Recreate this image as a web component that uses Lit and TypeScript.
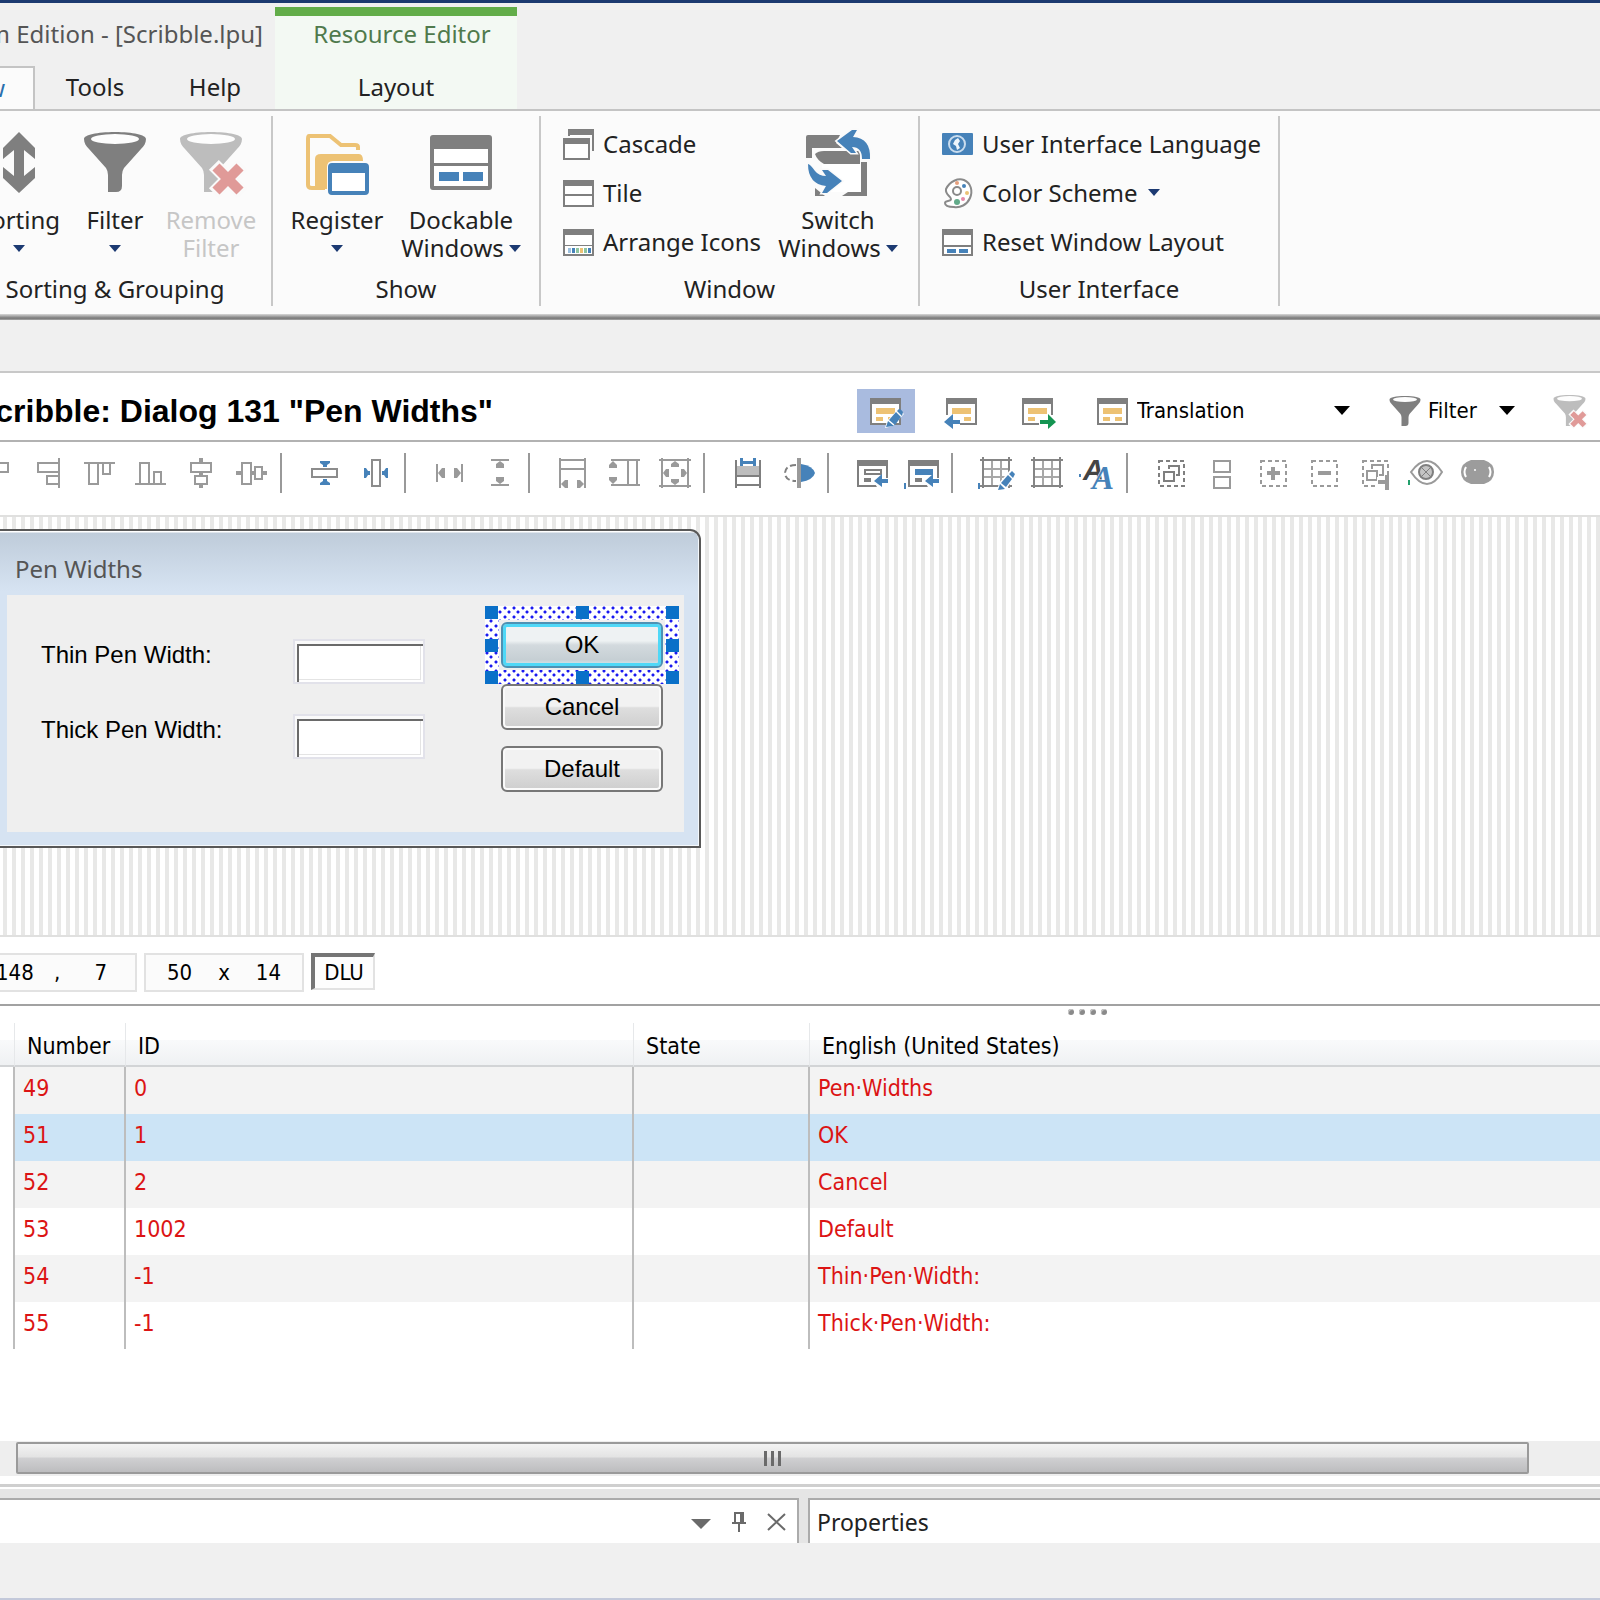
import { LitElement, html, css, svg, nothing } from "lit";
import type { SVGTemplateResult } from "lit";
import { customElement, state } from "lit/decorators.js";
import { classMap } from "lit/directives/class-map.js";

type Art = SVGTemplateResult;

const icon = (w: number, h: number, art: Art) =>
  html`<svg class="icon" width=${w} height=${h} viewBox="0 0 ${w} ${h}" aria-hidden="true">${art}</svg>`;

const caret = html`<svg class="caret" width="12" height="7" viewBox="0 0 12 7" aria-hidden="true"><path d="M0 0H12L6 7Z" fill="#1c3a72" /></svg>`;
const blackCaret = html`<svg class="icon" width="16" height="9" viewBox="0 0 16 9" aria-hidden="true"><path d="M0 0H16L8 9Z" fill="#000" /></svg>`;

const G = "#7f7f7f";
const L = "#9a9a9a";
const B = "#4682b9";
const Y = "#edc274";

/* ---- ribbon artwork ---- */
const sortArt = svg`<path d="M32 2L48 18V29L37 20V46L48 37V48L32 63L16 48V37L27 46V20L16 29V18Z" fill=${G} />`;

const funnel = (fill: string) => svg`
  <path d="M1 9C1 5 14 2 32 2S63 5 63 9C63 13 61 16 58 19L41 38Q39 41 39 45V56Q39 62 33 62H25V45Q25 41 23 38L6 19C3 16 1 13 1 9Z" fill=${fill} />
  <ellipse cx="32" cy="9" rx="24" ry="5" fill="#fdfdfd" />`;

const removeFunnel = svg`
  ${funnel("#bdbdbd")}
  <g transform="translate(49 49) rotate(45)">
    <path d="M-7 -20H7V-7H20V7H7V20H-7V7H-20V-7H-7Z" fill="#fafafa" />
    <path d="M-5 -17H5V-5H17V5H5V17H-5V5H-17V-5H-5Z" fill="#e09a98" />
  </g>`;

const registerArt = svg`
  <path d="M53 20V17Q53 15 50 15H36L25 6H4Q3 6 3 9V55Q3 58 7 58H20" fill="none" stroke=${Y} stroke-width="4" />
  <path d="M10 59V29Q10 24 16 24H54Q58 24 58 31H28Q22 31 22 37V59Z" fill=${Y} />
  <rect x="25" y="35" width="37" height="28" rx="2" fill="#fff" stroke=${B} stroke-width="4" />
  <rect x="24" y="34" width="39" height="9" fill=${B} />`;

const dockArt = svg`
  <rect x="3" y="7" width="58" height="51" rx="1" fill="#fff" stroke=${G} stroke-width="4" />
  <rect x="2" y="6" width="60" height="13" fill=${G} />
  <rect x="3" y="33" width="58" height="3" fill=${G} />
  <rect x="10" y="42" width="20" height="9" fill=${B} /><rect x="34" y="42" width="20" height="9" fill=${B} />`;

const switchArt = svg`
  <path d="M2 5H34L30 13L36 18H6V28H0V7Q0 5 2 5Z" fill=${G} />
  <path d="M9 24Q12 21 18 21H54V34H18Q11 30 9 24Z" fill=${G} />
  <path d="M16 34H55V62H16Z" fill="#fff" />
  <path d="M55 32H61V66H36L42 62H55ZM9 58L19 66H9Z" fill=${G} />
  <path d="M31 11L46 0H51L47 7Q65 8 64 29H56Q56 17 46 17L50 23H45Z" fill=${B} stroke="#fafafa" stroke-width="3" paint-order="stroke" />
  <path d="M36 51L21 63H16L20 56Q2 54 2 34Q4 34 9 41Q13 46 20 46L16 40H22Z" fill=${B} stroke="#fafafa" stroke-width="3" paint-order="stroke" />`;

const cascadeArt = svg`
  <rect x="6" y="2" width="24" height="20" fill="#fff" stroke=${G} stroke-width="2" />
  <rect x="5" y="1" width="26" height="6" fill=${G} />
  <rect x="0" y="8" width="29" height="24" fill="#fbfbfb" />
  <rect x="1" y="11" width="25" height="20" fill="#fff" stroke=${G} stroke-width="2" />
  <rect x="0" y="10" width="27" height="6" fill=${G} />`;
const pane = (inner: Art) => svg`
  <rect x="1" y="4" width="29" height="25" fill="#fff" stroke=${G} stroke-width="2" />
  <rect x="0" y="3" width="31" height="6" fill=${G} />${inner}`;
const tileArt = pane(svg`<rect x="1" y="17" width="29" height="2" fill=${G} />`);
const arrangeArt = pane(svg`
  <rect x="1" y="19" width="29" height="1" fill=${G} />
  <rect x="5" y="22" width="3" height="5" fill="#9cc0de" /><rect x="9" y="22" width="3" height="5" fill=${B} />
  <rect x="13" y="22" width="3" height="5" fill="#8ec5a0" /><rect x="17" y="22" width="3" height="5" fill=${Y} />
  <rect x="21" y="22" width="3" height="5" fill="#8ec5a0" /><rect x="25" y="22" width="3" height="5" fill=${B} />`);
const resetArt = pane(svg`
  <rect x="1" y="19" width="29" height="2" fill=${G} />
  <rect x="5" y="23" width="9" height="4" fill=${B} /><rect x="17" y="23" width="9" height="4" fill=${B} />`);
const flagArt = svg`
  <rect x="0" y="5" width="31" height="22" rx="1" fill=${B} />
  <circle cx="15" cy="16" r="8" fill="none" stroke="#c9dcee" stroke-width="2" />
  <path d="M16 10L13 12L11 16L14 18L15 22L18 20L16 16L18 13Z" fill="#eef5fb" />`;
const paletteArt = svg`
  <path d="M4 12C8 4 16 1 22 3C29 6 31 14 28 21C25 28 18 31 12 30C8 30 3 29 3 26C3 23 9 25 9 22C9 19 3 18 4 12Z" fill="#fff" stroke="#8a8a8a" stroke-width="2" />
  <circle cx="15" cy="14" r="4" fill="#fff" stroke="#8a8a8a" stroke-width="2" />
  <circle cx="15" cy="6" r="2" fill="#e8a07c" /><circle cx="22" cy="9" r="2" fill=${B} />
  <circle cx="25" cy="16" r="2" fill=${Y} /><circle cx="21" cy="22" r="2" fill="#e58aa8" /><circle cx="15" cy="25" r="3" fill="#62ab8a" />`;

/* ---- document header artwork ---- */
const form = svg`
  <rect x="1" y="4" width="29" height="25" fill="#fff" stroke=${G} stroke-width="2" />
  <rect x="0" y="3" width="31" height="6" fill=${G} />
  <rect x="6" y="13" width="19" height="6" fill=${Y} /><rect x="6" y="22" width="7" height="4" fill=${Y} /><rect x="18" y="22" width="7" height="4" fill=${Y} />`;
const pencil = svg`
  <path d="M15 33L17 26L28 14L34 19L23 31Z" fill="#fff" />
  <path d="M16 32L18 26L24 31ZM19 25L26 17L31 22L25 30ZM27 16L29 14Q31 14 33 17L32 21Z" fill=${B} />`;
const editFormArt = svg`${form}${pencil}`;
const backFormArt = svg`${form}<path d="M0 20H14V32H0Z" fill="#fff" /><path d="M-2 27L7 19V25H14V29H7V34Z" fill=${B} />`;
const nextFormArt = svg`${form}<path d="M17 20H32V32H17Z" fill="#fff" /><path d="M34 27L26 19V25H18V29H26V34Z" fill="#159552" />`;

/* ---- layout toolbar artwork, every drawing in a 32 px box ---- */
const ln = (d: string, c = L, w = 2) => svg`<path d=${d} fill="none" stroke=${c} stroke-width=${w} />`;
const box = (x: number, y: number, w: number, h: number, c = L) =>
  svg`<rect x=${x} y=${y} width=${w} height=${h} fill="#fff" stroke=${c} stroke-width="2" />`;
const fill = (d: string, c = L) => svg`<path d=${d} fill=${c} />`;

const win = (inner: Art) => svg`
  <rect x="2" y="4" width="29" height="25" fill="#fff" stroke=${G} stroke-width="2" />
  <rect x="1" y="3" width="31" height="6" fill=${G} />${inner}
  <path d="M16 21H33V32H22Z" fill="#fff" /><path d="M18 24L26 17V22H32V26H26V30Z" fill=${B} />`;
const grid = svg`${ln("M12 4V28M21 4V28M3 12H30M3 20H30", "#a8a8a8")}${ln("M3 0V31M29 0V31M0 3H32M0 29H32", "#858585")}`;
const dashes = (c: string) =>
  svg`<rect x="4" y="4" width="25" height="25" fill="none" stroke=${c} stroke-width="2" stroke-dasharray="4 3" />`;

interface Tool { name: string; art: Art }
const tools: Tool[][] = [
  [
    { name: "Align left", art: svg`${box(8, 6, 19, 9)}${box(8, 19, 4, 8, "#fff")}` },
    { name: "Align right", art: svg`${box(6, 6, 21, 9)}${box(15, 19, 12, 8)}${ln("M27 1V31")}` },
    { name: "Align top", art: svg`${box(6, 6, 9, 21)}${box(20, 6, 7, 11)}${ln("M1 6H32")}` },
    { name: "Align bottom", art: svg`${box(6, 6, 9, 21)}${box(20, 15, 7, 12)}${ln("M1 27H32")}` },
    { name: "Align centers", art: svg`${ln("M16 1V31", L, 4)}${box(6, 6, 20, 9)}${box(10, 19, 12, 8)}` },
    { name: "Align middles", art: svg`${ln("M0 16H31", L, 4)}${box(6, 6, 9, 21)}${box(19, 10, 7, 12)}` },
  ],
  [
    { name: "Center vertically", art: svg`${box(3, 12, 25, 8, "#8c8c8c")}${fill("M11 4H21V6L18 8V10H14V8L11 6ZM11 28H21V26L18 24V22H14V24L11 26Z", B)}` },
    { name: "Center horizontally", art: svg`${box(12, 3, 8, 26, "#8c8c8c")}${fill("M4 11V21H6L8 18H10V14H8L6 11ZM28 11V21H26L24 18H22V14H24L26 11Z", B)}` },
  ],
  [
    { name: "Space across", art: svg`${ln("M4 7V25M29 7V25")}${fill("M5 16L9 11H12V21H9ZM28 16L24 11H21V21H24Z")}` },
    { name: "Space down", art: svg`${ln("M7 3H25M7 28H25")}${fill("M16 4L20 7V11H12V7ZM16 27L20 24V20H12V24Z")}` },
  ],
  [
    { name: "Same width", art: svg`${ln("M3 1V31M28 1V31M3 3H28M3 12H28")}${fill("M4 27L8 23H11V31H8ZM27 27L23 23H20V31H23Z")}` },
    { name: "Same height", art: svg`${ln("M3 3H32M3 28H32M20 3V28M29 3V28")}${fill("M5 4L9 8V11H1V8ZM5 27L9 23V20H1V23Z")}` },
    { name: "Same size", art: svg`${ln("M3 1V31M29 1V31M0 3H32M0 29H32")}${fill("M16 4L20 7V10H12V7ZM16 28L20 25V22H12V25ZM4 16L7 12H10V20H7ZM28 16L25 12H22V20H25Z")}` },
  ],
  [
    { name: "Size to content", art: svg`<rect x="4" y="9" width="24" height="10" fill="#bdbdbd" />${ln("M4 3V31M28 3V31M4 19H28M4 28H28", G)}<path d="M6 2H26V9H6Z" fill="#fff" />${fill("M8 1H11V4H21V1H24V9H21V7H11V9H8Z", B)}` },
    { name: "Mirror", art: svg`<path d="M13 8C5 8 2 12 2 16S5 24 13 24" fill="none" stroke=${G} stroke-width="2" stroke-dasharray="6 3" />${fill("M18 7Q30 9 32 16Q30 23 18 25Z", B)}${ln("M16 1V31", L, 4)}` },
  ],
  [
    { name: "Tab order", art: win(svg`<rect x="9" y="13" width="16" height="4" fill="none" stroke=${G} stroke-width="2" /><rect x="8" y="21" width="7" height="4" fill=${G} />`) },
    { name: "Insert control", art: svg`${win(svg`<rect x="8" y="12" width="18" height="6" fill=${B} /><rect x="8" y="21" width="7" height="4" fill=${G} />`)}<rect x="-3" y="26" width="2" height="6" fill=${B} />` },
  ],
  [
    { name: "Edit grid", art: svg`${grid}<path d="M17 34L19 26L31 12L37 18L26 32Z" fill="#fff" />${fill("M18 33L20 27L25 32ZM21 26L28 18L32 22L26 30ZM29 17L32 14L35 17L33 21Z", B)}<rect x="-2" y="26" width="2" height="6" fill=${B} />` },
    { name: "Show grid", art: grid },
    { name: "Font", art: svg`<text x="1" y="23" font-family="Liberation Sans, sans-serif" font-weight="bold" font-style="italic" font-size="29" fill="#444">A</text><text x="10" y="32" font-family="Liberation Serif, serif" font-weight="bold" font-style="italic" font-size="33" fill=${B} stroke="#fff" stroke-width="1" paint-order="stroke">A</text><rect x="-3" y="17" width="2" height="3" fill=${B} />` },
  ],
  [
    { name: "Group", art: svg`${dashes(G)}${ln("M14 12V9H24V18H21", G)}${box(9, 15, 10, 9, G)}` },
    { name: "Stack", art: svg`${box(8, 4, 16, 11)}${box(8, 20, 16, 11)}` },
    { name: "Add to group", art: svg`${dashes(L)}${ln("M16 10V23M10 16H23", L, 4)}` },
    { name: "Remove from group", art: svg`${dashes(L)}${ln("M10 16H23", L, 4)}` },
    { name: "Move group", art: svg`${dashes(L)}${ln("M13 12V8H24V18H20")}${box(8, 14, 10, 9)}<path d="M18 20H32V34H18Z" fill="#fff" />${fill("M19 23H26V18H30V33H26V27H19Z")}` },
    { name: "Preview", art: svg`${fill("M-2 23H0V28H-2Z", "#22a06c")}<path d="M1 15Q9 4 17 4T32 15Q25 27 17 27T1 15Z" fill="#fff" stroke=${L} stroke-width="2" /><circle cx="16" cy="15" r="7" fill="#c4c4c4" stroke=${G} stroke-width="2" />${ln("M11 10L21 20M21 10L11 20", G, 1)}` },
    { name: "Show hidden", art: svg`<path d="M10 3H23Q33 6 33 15T23 27H10Q0 24 0 15T10 3Z" fill="#9c9c9c" /><circle cx="14" cy="13" r="1" fill="#fff" />${ln("M5 10Q2 15 5 20M28 10Q31 15 28 20", "#fff", 2)}` },
  ],
];

interface Entry { num: string; id: string; text: string }
const entries: Entry[] = [
  { num: "49", id: "0", text: "Pen·Widths" },
  { num: "51", id: "1", text: "OK" },
  { num: "52", id: "2", text: "Cancel" },
  { num: "53", id: "1002", text: "Default" },
  { num: "54", id: "-1", text: "Thin·Pen·Width:" },
  { num: "55", id: "-1", text: "Thick·Pen·Width:" },
];

const base = css`
  *, *::before, *::after { box-sizing: border-box; }
  button, select, input { font: inherit; color: inherit; margin: 0; padding: 0; border: 0; background: none; border-radius: 0; }
  button { white-space: nowrap; }
  svg { display: block; flex: none; overflow: visible; }
`;

@customElement("ribbon-bar")
class RibbonBar extends LitElement {
  static styles = [base, css`
    :host { display: block; font: 24px/28px "Noto Sans", "Open Sans", sans-serif; color: #222; }
    .top { display: flex; height: 109px; background: #f0f0f0; border-top: 3px solid #1c3a70; overflow: hidden; }
    .left { flex: 0 0 275px; min-width: 0; display: flex; flex-direction: column; justify-content: space-between; align-items: flex-end; }
    .title { margin: 17px 12px 0 0; white-space: nowrap; color: #555; }
    .tabs { display: flex; width: 275px; height: 43px; justify-content: flex-end; }
    .tab { width: 120px; height: 43px; flex: none; padding-bottom: 1px; }
    .tab.active { width: 106px; background: #fbfbfb; border: 2px solid #c4c4c4; border-bottom: 0; color: #2a6fae; text-align: right; padding-right: 28px; }
    .context { flex: 0 0 242px; margin-top: 4px; border-top: 9px solid #62ad49; background: #f3f9f3; display: flex; flex-direction: column; justify-content: space-between; align-items: center; }
    .context-title { margin: 4px 0 0 12px; color: #4f7a4c; white-space: nowrap; }
    .body { display: flex; height: 205px; padding-top: 5px; border-top: 2px solid #c4c4c4; background: #fbfbfb; overflow: hidden; }
    .edge { height: 6px; background: linear-gradient(#d8d8d8, #777 70%, #a8a8a8); }
    .group { flex: none; height: 190px; border-right: 2px solid #c8c8c8; padding-top: 14px; display: flex; flex-direction: column; justify-content: space-between; }
    .sorting { width: 273px; align-items: flex-end; padding-right: 12px; }
    .show { width: 268px; }
    .window { width: 379px; }
    .ui { width: 360px; }
    .row { display: flex; height: 133px; }
    .show .row { padding-left: 2px; }
    .wide { width: 288px; }
    .label { text-align: center; margin-bottom: 3px; }
    .big { display: flex; flex-direction: column; align-items: center; width: 96px; height: 133px; }
    .big.large { width: 124px; }
    .lines { display: flex; flex-direction: column; align-items: center; margin-top: 12px; }
    .line { display: flex; align-items: center; height: 28px; gap: 5px; }
    .big:disabled { color: #c6c6c6; }
    .list { display: flex; flex-direction: column; flex: 1; align-items: flex-start; height: 147px; margin-top: -11px; padding-left: 22px; }
    .item { display: flex; align-items: center; gap: 8px; height: 49px; }
    .item .caret { margin-left: 2px; }
    .window .big { margin-right: 18px; }
  `];

  private big(name: string, art: Art, second: unknown, large = false, disabled = false) {
    return html`<button class=${classMap({ big: true, large })} ?disabled=${disabled}>
      ${icon(64, 64, art)}
      <span class="lines"><span class="line">${name}</span><span class="line">${second}</span></span>
    </button>`;
  }

  private item(name: string, art: Art, arrow = false) {
    return html`<button class="item">${icon(32, 32, art)}${name}${arrow ? caret : nothing}</button>`;
  }

  render() {
    return html`
      <header class="top">
        <div class="left">
          <div class="title">Premium Edition - [Scribble.lpu]</div>
          <nav class="tabs">
            <button class="tab active">View</button>
            <button class="tab">Tools</button>
            <button class="tab">Help</button>
          </nav>
        </div>
        <div class="context">
          <div class="context-title">Resource Editor</div>
          <button class="tab">Layout</button>
        </div>
      </header>
      <div class="body">
        <section class="group sorting">
          <div class="row wide">
            ${this.big("Sorting", sortArt, caret)}
            ${this.big("Filter", funnel(G), caret)}
            ${this.big("Remove", removeFunnel, "Filter", false, true)}
          </div>
          <div class="label wide">Sorting &amp; Grouping</div>
        </section>
        <section class="group show">
          <div class="row">
            ${this.big("Register", registerArt, caret, true)}
            ${this.big("Dockable", dockArt, html`Windows${caret}`, true)}
          </div>
          <div class="label">Show</div>
        </section>
        <section class="group window">
          <div class="row">
            <div class="list">
              ${this.item("Cascade", cascadeArt)}${this.item("Tile", tileArt)}${this.item("Arrange Icons", arrangeArt)}
            </div>
            ${this.big("Switch", switchArt, html`Windows${caret}`, true)}
          </div>
          <div class="label">Window</div>
        </section>
        <section class="group ui">
          <div class="row">
            <div class="list">
              ${this.item("User Interface Language", flagArt)}${this.item("Color Scheme", paletteArt, true)}${this.item("Reset Window Layout", resetArt)}
            </div>
          </div>
          <div class="label">User Interface</div>
        </section>
      </div>
      <div class="edge"></div>
    `;
  }
}

@customElement("dialog-editor")
class DialogEditor extends LitElement {
  static styles = [base, css`
    :host { display: block; font: 23px/28px "DejaVu Sans Condensed", "Noto Sans", sans-serif; color: #000; background: #fff; border-top: 2px solid #c8c8c8; }
    .head { display: flex; align-items: center; height: 67px; padding: 8px 14px 0 0; }
    .title-clip { flex: 0 0 493px; display: flex; justify-content: flex-end; overflow: hidden; }
    .title { margin: 0; font: bold 32px/36px "Liberation Sans", sans-serif; white-space: nowrap; }
    .actions { display: flex; align-items: center; margin-left: auto; font-size: 22px; }
    .act { width: 58px; height: 44px; margin-right: 18px; display: flex; align-items: center; justify-content: center; }
    .act.on { background: #a9bbdf; }
    .pick { display: flex; align-items: center; gap: 8px; margin-left: 12px; }
    .pick select { appearance: none; width: 189px; height: 36px; }
    .filter { display: flex; align-items: center; width: 126px; margin: 0 38px 0 39px; gap: 7px; }
    .filter-text { flex: 1; text-align: left; }
    .bar { display: flex; align-items: center; height: 73px; padding-bottom: 11px; margin-left: -29px; overflow: hidden; }
    .bar-wrap { border-top: 2px solid #b2b2b2; overflow: hidden; }
    .tool { flex: none; width: 51px; height: 40px; display: flex; align-items: center; justify-content: center; }
    .sep { flex: none; width: 2px; height: 40px; background: #999; margin: 0 17px 0 3px; }
    .canvas { height: 422px; border-top: 2px solid #e0e0df; border-bottom: 2px solid #e0e0df; padding-top: 12px;
      background: repeating-linear-gradient(90deg, #fff 0 3px, #e8e8e7 3px 7px, #fff 7px 9px); }
    .dialog { width: 701px; height: 319px; border: 2px solid #585858; border-left: 0; border-top-right-radius: 11px; padding: 0 15px 14px 7px;
      background: linear-gradient(#fff 0 1px, #bfccda 2px, #d6e3f2 60px); box-shadow: inset -1px -1px #f4f8fc; display: flex; flex-direction: column; }
    .caption { flex: none; height: 64px; padding: 24px 0 0 8px; font: 24px/28px "Noto Sans", "Open Sans", sans-serif; color: #555; }
    .client { flex: 1; background: #efefef; display: flex; justify-content: space-between; padding: 27px 21px 0 34px; font: 24px/32px "Liberation Sans", sans-serif; }
    .fields { display: grid; grid-template-columns: 252px 132px; grid-auto-rows: 45px; row-gap: 30px; padding-top: 17px; }
    .field { width: 132px; height: 45px; background: #fff; border: 2px solid #e2e2ea; outline: 0; box-shadow: inset 2px 3px #fafafa, inset 4px 5px #6a6a6a, inset -2px -2px #fff, inset -3px -3px #e4e4e4; }
    .buttons { display: flex; flex-direction: column; gap: 16px; }
    .holder { position: relative; height: 46px; }
    .push { width: 162px; height: 46px; border: 2px solid #777; border-radius: 6px; box-shadow: inset 0 0 0 2px #fafafa; background: linear-gradient(#f2f2f2 0 48%, #dedede 52%, #cecece); }
    .push.default { position: relative; border-color: #4c92b4; box-shadow: inset 0 0 0 3px #4fd8f7; background: linear-gradient(#eef2f3 0 40%, #d3dade 50%, #c6cfd4 85%, #d8eef2); }
    .marquee { position: absolute; left: -16px; top: -16px; width: 194px; height: 78px;
      background: radial-gradient(circle at 2px 2px, #1a1af0 1px, transparent 2px) 0 0 / 9px 9px, radial-gradient(circle at 6px 6px, #1a1af0 1px, transparent 2px) 0 0 / 9px 9px, #fff;
      display: grid; grid-template-columns: repeat(3, 13px); grid-template-rows: repeat(3, 13px); justify-content: space-between; align-content: space-between; }
    .marquee::before { content: ""; position: absolute; inset: 14px; background: #efefef; }
    .grip { background: #0a70c8; }
    .gap { visibility: hidden; }
    .status { display: flex; align-items: flex-start; gap: 7px; height: 67px; padding-top: 16px; font-size: 22px; }
    .read { display: flex; height: 39px; align-items: center; justify-content: space-between; border: 2px solid #e2e2e2; background: #fbfbfb; }
    .at { width: 137px; border-left: 0; padding-right: 28px; }
    .at-x { margin-left: -4px; }
    .at-comma { margin-right: 14px; }
    .size { width: 160px; padding: 0 21px; }
    .unit { width: 64px; height: 37px; border: solid; border-width: 4px 2px 2px 4px; border-color: #757575 #e2e2e2 #e2e2e2 #757575; background: #fdfdfd; }
  `];

  @state() private mode = 0;

  render() {
    const modes: [string, Art][] = [["Edit", editFormArt], ["Previous", backFormArt], ["Next", nextFormArt]];
    return html`
      <div class="head">
        <div class="title-clip"><h1 class="title">Scribble: Dialog 131 "Pen Widths"</h1></div>
        <div class="actions">
          ${modes.map(([name, art], i) => html`
            <button class=${classMap({ act: true, on: i === this.mode })} aria-label=${name} @click=${() => (this.mode = i)}>${icon(32, 32, art)}</button>`)}
          <div class="pick">
            ${icon(32, 32, form)}
            <select aria-label="View"><option>Translation</option><option>Source</option></select>
            ${blackCaret}
          </div>
          <button class="filter">
            <svg width="32" height="32" viewBox="0 0 64 64" aria-hidden="true">${funnel(G)}</svg>
            <span class="filter-text">Filter</span>${blackCaret}
          </button>
          <button aria-label="Remove filter" disabled>
            <svg width="33" height="33" viewBox="0 0 64 64" aria-hidden="true">${removeFunnel}</svg>
          </button>
        </div>
      </div>
      <div class="bar-wrap">
        <div class="bar" role="toolbar">
          ${tools.map((set, i) => html`${i ? html`<span class="sep"></span>` : nothing}${set.map(
            (t) => html`<button class="tool" aria-label=${t.name}>${icon(32, 32, t.art)}</button>`)}`)}
        </div>
      </div>
      <div class="canvas">
        <section class="dialog">
          <div class="caption">Pen Widths</div>
          <div class="client">
            <div class="fields">
              <label for="thin">Thin Pen Width:</label><input class="field" id="thin" type="text" />
              <label for="thick">Thick Pen Width:</label><input class="field" id="thick" type="text" />
            </div>
            <div class="buttons">
              <div class="holder">
                <div class="marquee">${[0, 1, 2, 3, 4, 5, 6, 7, 8].map((n) => html`<i class=${n === 4 ? "gap" : "grip"}></i>`)}</div>
                <button class="push default">OK</button>
              </div>
              <button class="push">Cancel</button>
              <button class="push">Default</button>
            </div>
          </div>
        </section>
      </div>
      <div class="status">
        <div class="read at"><span class="at-x">148</span><span class="at-comma">,</span><span>7</span></div>
        <div class="read size"><span>50</span><span>x</span><span>14</span></div>
        <button class="unit">DLU</button>
      </div>
    `;
  }
}

@customElement("string-table")
class StringTable extends LitElement {
  static styles = [base, css`
    :host { display: block; background: #fff; border-top: 2px solid #a2a2a2; font: 23px/28px "DejaVu Sans Condensed", "Noto Sans", sans-serif; color: #000; }
    .dots { display: flex; justify-content: center; gap: 5px; height: 17px; padding-top: 3px; padding-left: 575px; }
    .dot { width: 6px; height: 6px; border-radius: 3px; background: #8a8a8a; box-shadow: inset 1px 1px #c8c8c8; }
    .table { width: 100%; table-layout: fixed; border-collapse: separate; border-spacing: 0; }
    .c0 { width: 15px; } .c1 { width: 111px; } .c2 { width: 508px; } .c3 { width: 176px; }
    .table th { height: 44px; padding: 4px 0 0 12px; text-align: left; font-weight: normal; border-right: 1px solid #e6e8ea; border-bottom: 2px solid #d2d4d6;
      background: linear-gradient(#fff 0 40%, #f9fafb 41%, #eff1f3); }
    .table td { height: 47px; padding: 0 0 5px 8px; color: #dc1414; border-right: 2px solid #bdbdbd; }
    .table tr > :last-child { border-right: 0; }
    .odd td { background: #f3f3f3; }
    .table .picked td { background: #cce4f6; }
    .table tr td.lead { background: #fff; }
    .scroll { margin-top: 92px; padding: 1px 71px 2px 16px; background: #eee; }
    .thumb { display: flex; align-items: center; justify-content: center; gap: 4px; width: 100%; height: 32px; border: 2px solid #9a9a9a; border-radius: 2px;
      background: linear-gradient(#f3f3f3, #e4e4e4 45%, #cfcfd1 52%, #bdbdbf); }
    .ridge { width: 3px; height: 15px; background: #6a6a6a; }
    .space { height: 8px; }
  `];

  @state() private picked = 1;

  render() {
    return html`
      <div class="dots"><i class="dot"></i><i class="dot"></i><i class="dot"></i><i class="dot"></i></div>
      <table class="table">
        <colgroup><col class="c0" /><col class="c1" /><col class="c2" /><col class="c3" /><col /></colgroup>
        <thead><tr><th></th><th>Number</th><th>ID</th><th>State</th><th>English (United States)</th></tr></thead>
        <tbody>
          ${entries.map((e, i) => html`
            <tr class=${classMap({ odd: i % 2 === 0, picked: i === this.picked })} @click=${() => (this.picked = i)}>
              <td class="lead"></td><td>${e.num}</td><td>${e.id}</td><td></td><td>${e.text}</td>
            </tr>`)}
        </tbody>
      </table>
      <div class="scroll"><button class="thumb" aria-label="Scroll"><i class="ridge"></i><i class="ridge"></i><i class="ridge"></i></button></div>
      <div class="space"></div>
    `;
  }
}

@customElement("app-root")
class AppRoot extends LitElement {
  static styles = [base, css`
    :host { box-sizing: border-box; display: flex; flex-direction: column; min-height: 100vh; background: #f0f0f0; overflow: hidden; border-bottom: 2px solid #c3c9da; }
    .blank { height: 51px; }
    .split { height: 5px; background: #cfcfcf; border-bottom: 2px solid #fff; }
    .docks { display: grid; grid-template-columns: 799fr 792fr; gap: 9px; padding-top: 9px; background: #e5e5e5; font: 23px/28px "Noto Sans", "Open Sans", sans-serif; color: #222; }
    .dock { display: flex; align-items: center; height: 45px; background: #fff; border-top: 2px solid #ababab; }
    .first { justify-content: flex-end; gap: 20px; padding-right: 11px; border-right: 2px solid #ababab; }
    .second { border-left: 2px solid #ababab; padding-left: 7px; }
    .dock-title { margin: 0; font: inherit; }
  `];

  render() {
    return html`
      <ribbon-bar></ribbon-bar>
      <div class="blank"></div>
      <dialog-editor></dialog-editor>
      <string-table></string-table>
      <div class="split"></div>
      <div class="docks">
        <section class="dock first">
          <button aria-label="Menu">${icon(20, 20, svg`<path d="M0 7H20L10 17Z" fill="#6a6a6a" />`)}</button>
          <button aria-label="Pin">${icon(16, 20, svg`<path d="M4 11V1H12V11M1 11H15M8 11V20" fill="none" stroke="#6a6a6a" stroke-width="2" /><path d="M9 1H12V11H9Z" fill="#6a6a6a" />`)}</button>
          <button aria-label="Close">${icon(19, 20, svg`<path d="M1 2L18 18M18 2L1 18" stroke="#6a6a6a" stroke-width="2" />`)}</button>
        </section>
        <section class="dock second"><h2 class="dock-title">Properties</h2></section>
      </div>
    `;
  }
}
